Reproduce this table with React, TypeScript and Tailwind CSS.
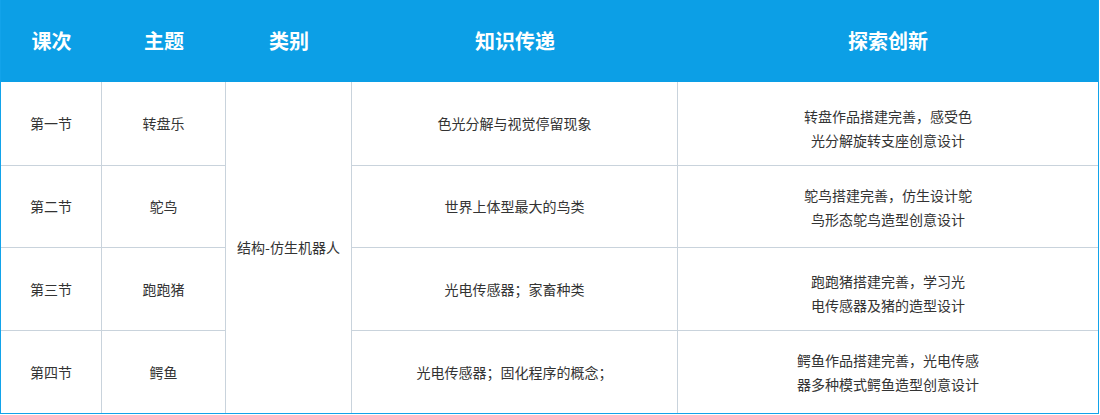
import React from "react";

const rows = [
  {
    n: "第一节",
    t: "转盘乐",
    k: "色光分解与视觉停留现象",
    e: ["转盘作品搭建完善，感受色", "光分解旋转支座创意设计"],
    pad: "pt-[9px]",
  },
  {
    n: "第二节",
    t: "鸵鸟",
    k: "世界上体型最大的鸟类",
    e: ["鸵鸟搭建完善，仿生设计鸵", "鸟形态鸵鸟造型创意设计"],
    pad: "pt-[1px]",
  },
  {
    n: "第三节",
    t: "跑跑猪",
    k: "光电传感器；家畜种类",
    e: ["跑跑猪搭建完善，学习光", "电传感器及猪的造型设计"],
    pad: "pt-[8px]",
  },
  {
    n: "第四节",
    t: "鳄鱼",
    k: "光电传感器；固化程序的概念；",
    e: ["鳄鱼作品搭建完善，光电传感", "器多种模式鳄鱼造型创意设计"],
    pad: "pt-0",
  },
];

export default function App() {
  const font = {
    fontFamily: '"Noto Sans CJK SC", "Noto Sans", sans-serif',
  };
  const head = ["课次", "主题", "类别", "知识传递", "探索创新"];
  return (
    <div className="w-[1100px] h-[415px] bg-white" style={font}>
      <div className="w-[1099px] border-x border-b border-[#12a3ea] grid grid-cols-[101px_124px_126px_326px_420px] grid-rows-[82px_84px_82px_83px_82px]">
        {head.map((h) => (
          <div
            key={h}
            className="bg-[#0c9fe6] flex items-center justify-center text-white text-[20px] font-bold"
          >
            {h}
          </div>
        ))}
        {rows.map((r, i) => {
          const last = i === rows.length - 1;
          const bb = last ? "" : "border-b";
          return (
            <React.Fragment key={r.n}>
              <div
                className={`flex items-center justify-center border-r ${bb} border-[#c9d3dc] text-[14px] text-[#333]`}
              >
                {r.n}
              </div>
              <div
                className={`flex items-center justify-center border-r ${bb} border-[#c9d3dc] text-[14px] text-[#333]`}
              >
                {r.t}
              </div>
              {i === 0 && (
                <div className="row-span-4 flex items-center justify-center border-r border-[#c9d3dc] text-[14px] text-[#333]">
                  结构-仿生机器人
                </div>
              )}
              <div
                className={`flex items-center justify-center border-r ${bb} border-[#c9d3dc] text-[14px] text-[#333]`}
              >
                {r.k}
              </div>
              <div
                className={`flex flex-col items-center justify-center ${r.pad} ${bb} border-[#c9d3dc] text-[14px] leading-[24px] text-[#333]`}
              >
                {r.e.map((l) => (
                  <div key={l}>{l}</div>
                ))}
              </div>
            </React.Fragment>
          );
        })}
      </div>
    </div>
  );
}
